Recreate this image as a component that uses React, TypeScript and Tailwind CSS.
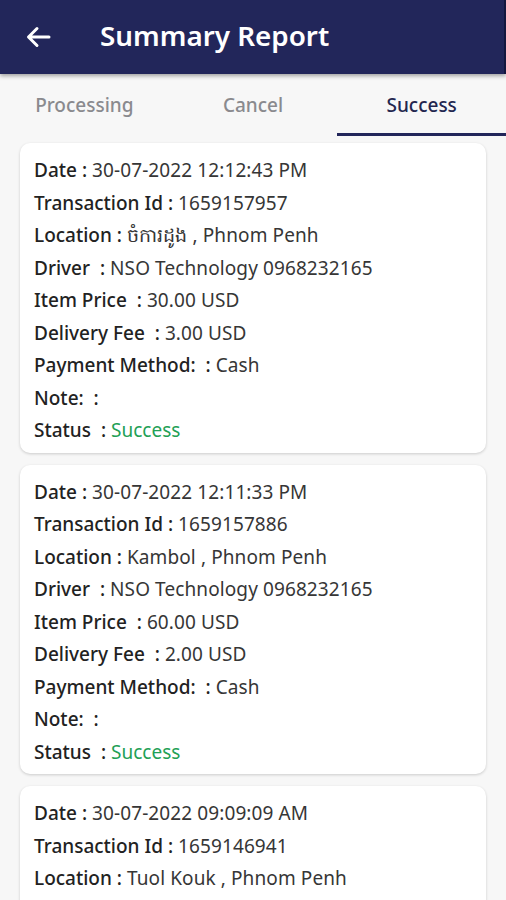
import React from "react";

type Row = { label: string; value: string; green?: boolean };

const cards: Row[][] = [
  [
    { label: "Date :", value: "30-07-2022 12:12:43 PM" },
    { label: "Transaction Id :", value: "1659157957" },
    { label: "Location :", value: "ចំការដូង , Phnom Penh" },
    { label: "Driver  :", value: "NSO Technology 0968232165" },
    { label: "Item Price  :", value: "30.00 USD" },
    { label: "Delivery Fee  :", value: "3.00 USD" },
    { label: "Payment Method:  :", value: "Cash" },
    { label: "Note:  :", value: "" },
    { label: "Status  :", value: "Success", green: true },
  ],
  [
    { label: "Date :", value: "30-07-2022 12:11:33 PM" },
    { label: "Transaction Id :", value: "1659157886" },
    { label: "Location :", value: "Kambol , Phnom Penh" },
    { label: "Driver  :", value: "NSO Technology 0968232165" },
    { label: "Item Price  :", value: "60.00 USD" },
    { label: "Delivery Fee  :", value: "2.00 USD" },
    { label: "Payment Method:  :", value: "Cash" },
    { label: "Note:  :", value: "" },
    { label: "Status  :", value: "Success", green: true },
  ],
  [
    { label: "Date :", value: "30-07-2022 09:09:09 AM" },
    { label: "Transaction Id :", value: "1659146941" },
    { label: "Location :", value: "Tuol Kouk , Phnom Penh" },
    { label: "Driver  :", value: "NSO Technology 0968232165" },
    { label: "Item Price  :", value: "60.00 USD" },
    { label: "Delivery Fee  :", value: "2.00 USD" },
    { label: "Payment Method:  :", value: "Cash" },
    { label: "Note:  :", value: "" },
    { label: "Status  :", value: "Success", green: true },
  ],
];

export default function App() {
  return (
    <div
      className="w-[506px] h-[900px] overflow-hidden bg-[#f7f7f7] flex flex-col"
      style={{ fontFamily: '"Noto Sans", "Noto Sans CJK SC", sans-serif' }}
    >
      <div className="h-[74px] shrink-0 bg-[#22265a] flex items-center shadow-[0_2px_4px_rgba(0,0,0,0.35)] relative z-10 border-r-[2px] border-[#14173f]">
        <div className="w-[100px] flex items-center pl-[26px]">
          <svg width="25" height="22" viewBox="0 0 25 22" fill="none" stroke="white" strokeWidth="3" strokeLinecap="round" strokeLinejoin="round">
            <path d="M23 11H3M11 2.5L2.5 11L11 19.5" />
          </svg>
        </div>
        <div className="text-white text-[27.8px] font-semibold leading-none -mt-[2px]">Summary Report</div>
      </div>
      <div className="h-[62px] shrink-0 bg-[#f7f7f7] grid grid-cols-3">
        <div className="flex items-center justify-center text-[19px] font-medium text-[#8a8a8e]">Processing</div>
        <div className="flex items-center justify-center text-[19px] font-medium text-[#8a8a8e]">Cancel</div>
        <div className="flex items-center justify-center text-[19px] font-medium text-[#23264f] border-b-[3px] border-[#22265a] pt-[3px]">Success</div>
      </div>
      <div className="flex flex-col gap-[12px] px-[20px] pt-[7px]">
        {cards.map((rows, i) => (
          <div key={i} className="bg-white rounded-[10px] shadow-[0_1px_3px_rgba(0,0,0,0.18)] pl-[14px] pt-[11px] pb-[6px] shrink-0">
            {rows.map((r, j) => (
              <div key={j} className="h-[32.5px] flex items-center text-[19px] whitespace-pre">
                <span className="font-medium text-[#222222]">{r.label}</span>
                <span className={r.green ? "text-[#22a055] ml-[5px]" : "text-[#363636] ml-[5px] tracking-[0.1px]"}>{r.value}</span>
              </div>
            ))}
          </div>
        ))}
      </div>
    </div>
  );
}
